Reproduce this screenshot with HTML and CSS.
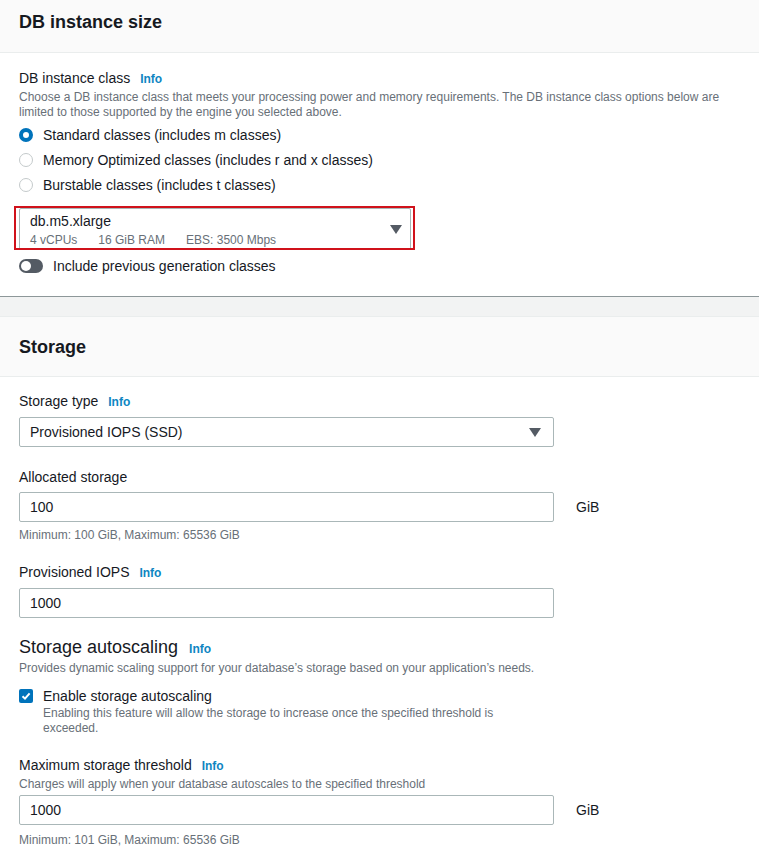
FILE: index.html
```html
<!DOCTYPE html>
<html lang="en">

<head>
    <meta charset="UTF-8" />
    <meta name="viewport" content="width=device-width, initial-scale=1.0" />
    <title>Create database</title>
    <link rel="stylesheet" href="styles.css">
</head>

<body>
    <div class="panel panel-first">
        <div class="panel-header">
            <h2>DB instance size</h2>
        </div>
        <div class="panel-body">
            <div class="field-label">DB instance class <a class="info" href="#">Info</a></div>
            <p class="field-desc">Choose a DB instance class that meets your processing power and memory requirements. The DB instance class options below are limited to those supported by the engine you selected above.</p>

            <div class="radio-group">
                <label class="radio-row"><span class="radio checked"></span>Standard classes (includes m classes)</label>
                <label class="radio-row"><span class="radio"></span>Memory Optimized classes (includes r and x classes)</label>
                <label class="radio-row"><span class="radio"></span>Burstable classes (includes t classes)</label>
            </div>

            <div class="class-select-wrap">
                <div class="select class-select">
                    <div>
                        <div class="select-value">db.m5.xlarge</div>
                        <div class="select-tags">
                            <span>4 vCPUs</span>
                            <span>16 GiB RAM</span>
                            <span>EBS: 3500 Mbps</span>
                        </div>
                    </div>
                    <span class="caret"></span>
                </div>
                <div class="highlight"></div>
            </div>

            <div class="toggle-row">
                <span class="toggle"><span class="knob"></span></span>
                Include previous generation classes
            </div>
        </div>
    </div>

    <div class="panel">
        <div class="panel-header">
            <h2>Storage</h2>
        </div>
        <div class="panel-body">
            <div class="field field-first">
                <div class="field-label">Storage type <a class="info" href="#">Info</a></div>
                <div class="select">
                    <span class="select-value">Provisioned IOPS (SSD)</span>
                    <span class="caret"></span>
                </div>
            </div>

            <div class="field">
                <div class="field-label">Allocated storage</div>
                <div class="input-row">
                    <div class="input">100</div>
                    <span class="unit">GiB</span>
                </div>
                <div class="hint">Minimum: 100 GiB, Maximum: 65536 GiB</div>
            </div>

            <div class="field">
                <div class="field-label">Provisioned IOPS <a class="info" href="#">Info</a></div>
                <div class="input-row">
                    <div class="input">1000</div>
                </div>
            </div>

            <div class="field">
                <h3 class="sub-heading">Storage autoscaling <a class="info" href="#">Info</a></h3>
                <p class="field-desc">Provides dynamic scaling support for your database’s storage based on your application’s needs.</p>
                <div class="check-row">
                    <span class="checkbox">
                        <svg width="10" height="10" viewBox="0 0 10 10">
                            <path d="M1.5 5.2 L4 7.6 L8.6 2.4" fill="none" stroke="#fff" stroke-width="2" />
                        </svg>
                    </span>
                    <div>
                        <div class="check-label">Enable storage autoscaling</div>
                        <div class="check-desc">Enabling this feature will allow the storage to increase once the specified threshold is exceeded.</div>
                    </div>
                </div>
            </div>

            <div class="field field-threshold">
                <div class="field-label">Maximum storage threshold <a class="info" href="#">Info</a></div>
                <p class="field-desc">Charges will apply when your database autoscales to the specified threshold</p>
                <div class="input-row">
                    <div class="input">1000</div>
                    <span class="unit">GiB</span>
                </div>
                <div class="hint hint-last">Minimum: 101 GiB, Maximum: 65536 GiB</div>
            </div>
        </div>
    </div>
</body>

</html>
```

FILE: styles.css
```css
body {
    margin: 0;
    font-family: "Liberation Sans", Arial, sans-serif;
    font-size: 14px;
    color: #16191f;
    background: #f2f3f3;
}

.panel {
    background: #ffffff;
    border-top: 1px solid #eaeded;
}

.panel-first {
    border-top: none;
    border-bottom: 1px solid #8d9799;
    margin-bottom: 19px;
}

.panel-header {
    background: #fafafa;
    border-bottom: 1px solid #eaeded;
    padding: 18px 19px 17px;
}

.panel-first .panel-header {
    padding: 10px 19px 18px;
}

.panel-header h2 {
    margin: 0;
    font-size: 18px;
    line-height: 24px;
    font-weight: bold;
}

.panel-body {
    padding: 14px 19px 20px;
}

.panel-first .panel-body {
    padding: 15px 19px 20px;
}

.field-label {
    line-height: 20px;
}

.info {
    color: #0e86c2;
    font-size: 12px;
    font-weight: bold;
    text-decoration: none;
    margin-left: 6px;
}

.field-desc {
    margin: 1px 0 0;
    font-size: 12px;
    line-height: 15px;
    color: #687078;
}

.radio-group {
    margin-top: 2px;
}

.radio-row {
    display: flex;
    align-items: center;
    height: 25px;
    gap: 10px;
}

.radio {
    width: 14px;
    height: 14px;
    border-radius: 50%;
    border: 1px solid #c4cacb;
    box-sizing: border-box;
    background: #fff;
}

.radio.checked {
    border: 4px solid #0073bb;
}

.class-select-wrap {
    position: relative;
    margin-top: 11px;
    width: 392px;
}

.select {
    display: flex;
    align-items: center;
    justify-content: space-between;
    border: 1px solid #aab7b8;
    border-radius: 2px;
    padding: 0 10px;
    height: 30px;
    box-sizing: border-box;
    width: 535px;
    background: #fff;
}

.class-select {
    width: 392px;
    height: 42px;
    padding: 0 10px;
}

.select-value {
    line-height: 20px;
}

.select-tags {
    font-size: 12px;
    line-height: 15px;
    color: #687078;
    display: flex;
    gap: 21px;
    margin-top: 2px;
}

.caret {
    width: 0;
    height: 0;
    border-left: 6px solid transparent;
    border-right: 6px solid transparent;
    border-top: 9px solid #545b64;
    margin-right: 2px;
}

.class-select .caret {
    margin-right: -2px;
}

.highlight {
    position: absolute;
    left: -5px;
    top: -2px;
    width: 401px;
    height: 44px;
    box-sizing: border-box;
    border: 2px solid #d0121b;
}

.toggle-row {
    display: flex;
    align-items: center;
    gap: 10px;
    line-height: 20px;
    margin-top: 6px;
}

.toggle {
    width: 24px;
    height: 14px;
    border-radius: 7px;
    background: #545b64;
    display: flex;
    align-items: center;
    padding-left: 2px;
    box-sizing: border-box;
}

.knob {
    width: 10px;
    height: 10px;
    border-radius: 50%;
    background: #fff;
}

.field {
    margin-bottom: 19px;
}

.field-first {
    margin-bottom: 20px;
}

.field:last-child {
    margin-bottom: 0;
}

.field-label + .select,
.field-label + .input-row {
    margin-top: 5px;
}

.input-row {
    display: flex;
    align-items: center;
}

.field-desc + .input-row {
    margin-top: 3px;
}

.field-threshold .field-desc {
    margin-top: 1px;
}

.input {
    width: 535px;
    height: 30px;
    box-sizing: border-box;
    border: 1px solid #aab7b8;
    border-radius: 2px;
    padding: 0 10px;
    line-height: 28px;
}

.unit {
    margin-left: 22px;
}

.hint {
    margin-top: 6px;
    font-size: 12px;
    line-height: 15px;
    color: #687078;
}

.hint-last {
    margin-top: 8px;
}

.sub-heading {
    margin: 3px 0 0;
    font-size: 18px;
    font-weight: normal;
    line-height: 21px;
}

.check-row {
    display: flex;
    gap: 10px;
    margin-top: 10px;
}

.checkbox {
    flex: none;
    width: 14px;
    height: 14px;
    margin-top: 3px;
    border-radius: 2px;
    background: #0073bb;
    display: flex;
    align-items: center;
    justify-content: center;
}

.check-label {
    line-height: 20px;
}

.check-desc {
    width: 480px;
    font-size: 12px;
    line-height: 15px;
    color: #687078;
}
```
